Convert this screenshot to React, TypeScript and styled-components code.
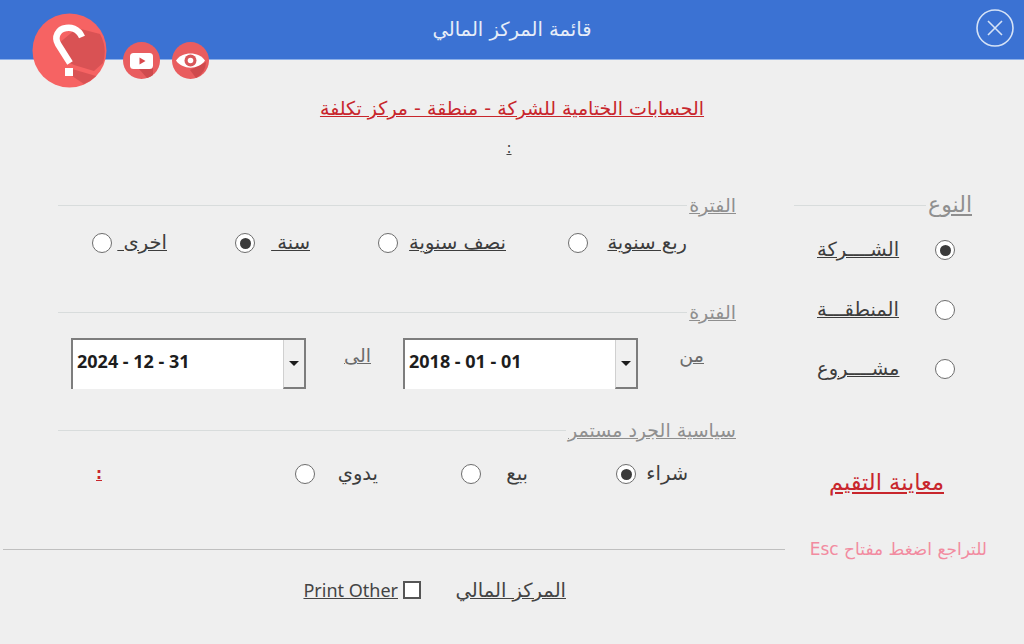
import React from 'react'
import styled, { createGlobalStyle } from 'styled-components'

const GlobalStyle = createGlobalStyle`
  html, body {
    margin: 0;
    padding: 0;
    background: #efefef;
  }
  body {
    font-family: 'DejaVu Sans', 'Noto Sans', sans-serif;
  }
`

const Page = styled.div`
  position: relative;
  width: 1024px;
  height: 644px;
  overflow: hidden;
  background: #efefef;
  direction: rtl;
`

const Header = styled.header`
  box-sizing: border-box;
  height: 60px;
  background: #3b72d3;
  border-bottom: 1px solid #8db0e8;
  display: flex;
  align-items: center;
  justify-content: center;
  position: relative;
`

const HeaderTitle = styled.h1`
  margin: 0;
  font-size: 19.5px;
  font-weight: 400;
  color: #e6edf8;
`

const CloseButton = styled.button`
  position: absolute;
  left: 976px;
  top: 9px;
  width: 38px;
  height: 38px;
  padding: 0;
  border: 0;
  background: none;
`

const HelpIcons = styled.div`
  position: absolute;
  left: 32px;
  top: 13px;
  direction: ltr;
  display: flex;
  align-items: flex-end;
  gap: 16px;
`

const SmallIcons = styled.div`
  display: flex;
  gap: 12px;
  margin-bottom: 9px;
`

const Heading = styled.h2`
  margin: 37px 0 0;
  height: 22px;
  line-height: 22px;
  text-align: center;
  font-size: 19px;
  font-weight: 400;
  color: #c8262c;
  text-decoration: underline;
`

const Colon = styled.div`
  margin-top: 19px;
  height: 20px;
  line-height: 20px;
  text-align: center;
  padding-right: 6px;
  font-size: 15px;
  color: #444;
  text-decoration: underline;
`

const Columns = styled.div`
  margin-top: 37px;
  padding: 0 52px 0 58px;
  display: grid;
  grid-template-columns: 178px 678px;
  column-gap: 58px;
`

const Column = styled.div`
  display: flex;
  flex-direction: column;
`

const Legend = styled.div<{ $top?: number }>`
  margin-top: ${(p) => p.$top ?? 0}px;
  height: 20px;
  display: flex;
  align-items: center;
  gap: 2px;
  &::after {
    content: '';
    flex: 1;
    height: 1px;
    background: #d8dcdc;
  }
`

const LegendText = styled.span<{ $size?: number }>`
  font-size: ${(p) => p.$size ?? 19}px;
  line-height: 20px;
  color: #8f8f8f;
  text-decoration: underline;
  white-space: nowrap;
`

const OptionRow = styled.div<{ $top: number }>`
  margin-top: ${(p) => p.$top}px;
  height: 24px;
  display: flex;
  align-items: center;
`

const Option = styled.label<{ $width: number; $start?: number; $top?: number }>`
  box-sizing: border-box;
  width: ${(p) => p.$width}px;
  height: 24px;
  flex: none;
  margin-right: ${(p) => p.$start ?? 0}px;
  margin-top: ${(p) => p.$top ?? 0}px;
  display: flex;
  align-items: center;
  justify-content: space-between;
`

const OptionText = styled.span<{ $plain?: boolean }>`
  font-size: 19.5px;
  line-height: 24px;
  color: #3d3d3d;
  white-space: pre;
  text-decoration: ${(p) => (p.$plain ? 'none' : 'underline')};
`

const Radio = styled.span<{ $checked?: boolean }>`
  box-sizing: border-box;
  width: 20px;
  height: 20px;
  flex: none;
  border-radius: 50%;
  border: 1.5px solid #6d6d6d;
  background: #fff;
  display: flex;
  align-items: center;
  justify-content: center;
  &::after {
    content: '';
    display: ${(p) => (p.$checked ? 'block' : 'none')};
    width: 11px;
    height: 11px;
    border-radius: 50%;
    background: #3a3a3a;
  }
`

const DateRow = styled.div`
  margin-top: 16px;
  padding-right: 32px;
  height: 51px;
  display: flex;
`

const DateLabel = styled.span<{ $gap?: number }>`
  width: 26px;
  flex: none;
  margin-right: ${(p) => p.$gap ?? 0}px;
  padding-top: 5px;
  font-size: 19px;
  line-height: 24px;
  color: #6b6b6b;
  text-decoration: underline;
  white-space: nowrap;
`

const DateBox = styled.div<{ $gap: number }>`
  box-sizing: border-box;
  width: 235px;
  height: 51px;
  flex: none;
  direction: ltr;
  background: #fff;
  border-top: 2px solid #7d7d7d;
  border-left: 2px solid #7d7d7d;
  display: flex;
  margin-right: ${(p) => p.$gap}px;
`

const DateValue = styled.span`
  flex: 1;
  padding: 11px 0 0 4px;
  font-family: 'Noto Sans', sans-serif;
  font-size: 18px;
  line-height: 20px;
  font-weight: 700;
  color: #1d1d1d;
`

const DateArrow = styled.span`
  box-sizing: border-box;
  width: 23px;
  background: #f0f0f0;
  border-left: 1px solid #d0d0d0;
  border-right: 2px solid #7d7d7d;
  border-bottom: 2px solid #7d7d7d;
  display: flex;
  align-items: center;
  justify-content: center;
  &::after {
    content: '';
    border-style: solid;
    border-width: 5px 5px 0;
    border-color: #1d1d1d transparent transparent;
  }
`

const PolicyRow = styled.div`
  margin-top: 22px;
  height: 24px;
  padding-right: 48px;
  display: flex;
  align-items: center;
`

const RedMark = styled.span`
  margin-right: 193px;
  font-size: 15px;
  font-weight: 700;
  color: #c8262c;
  text-decoration: underline;
`

const PreviewLink = styled.a`
  margin-top: 89px;
  margin-right: 28px;
  height: 24px;
  line-height: 24px;
  font-size: 22.5px;
  color: #c8262c;
  text-decoration: underline;
  white-space: nowrap;
`

const Divider = styled.div`
  margin-top: 45px;
  height: 20px;
  padding: 0 37px 0 3px;
  display: flex;
  align-items: center;
  gap: 25px;
  &::after {
    content: '';
    flex: 1;
    height: 1px;
    background: #bfbfbf;
  }
`

const EscHint = styled.span`
  width: 177px;
  flex: none;
  font-size: 17px;
  color: #f28ba0;
  white-space: nowrap;
`

const BottomRow = styled.div`
  margin-top: 19px;
  height: 24px;
  padding-right: 458px;
  display: flex;
  align-items: center;
`

const BottomLabel = styled.span`
  width: 110px;
  margin-left: 35px;
  font-size: 19.5px;
  color: #444;
  text-decoration: underline;
  white-space: nowrap;
`

const Checkbox = styled.span`
  box-sizing: border-box;
  width: 18px;
  height: 18px;
  background: #fff;
  border: 2px solid #555;
  margin-left: 5px;
`

const PrintOther = styled.span`
  direction: ltr;
  font-family: 'Noto Sans', sans-serif;
  font-size: 18px;
  color: #444;
  text-decoration: underline;
`

const CloseIcon = () => (
  <svg width="38" height="38" viewBox="0 0 38 38" fill="none" stroke="#d5e2f6" strokeWidth="1.6">
    <circle cx="19" cy="19" r="18" />
    <path d="M12 12 L26 26 M26 12 L12 26" />
  </svg>
)

const QuestionIcon = () => (
  <svg width="75" height="75" viewBox="0 0 75 75">
    <circle cx="37.5" cy="37.5" r="37" fill="#f66363" />
    <path d="M45 15 L68 21 A37 37 0 0 1 71 50 L62 58 L42 52 L38 50 L26 31 Z" fill="#d95254" />
    <path d="M40 56 L64 63 A37 37 0 0 1 52 71 L40 63 Z" fill="#d95254" />
    <path
      d="M50 24 C46 15 38 14 34 15 C26 16 22 24 26 31 L38 50"
      fill="none"
      stroke="#fff"
      strokeWidth="6.5"
    />
    <rect x="33" y="55" width="8" height="8" fill="#fff" />
  </svg>
)

const YoutubeIcon = () => (
  <svg width="37" height="37" viewBox="0 0 37 37">
    <circle cx="18.5" cy="18.5" r="18.5" fill="#e95d5f" />
    <path d="M18 24 L30 24 L30 33 A18.5 18.5 0 0 1 24 36 L16 27 Z" fill="#cf4a4d" />
    <rect x="7" y="11" width="23" height="16" rx="3.5" fill="#fff" />
    <path d="M16.5 15.5 L22.5 19 L16.5 22.5 Z" fill="#d9484b" />
  </svg>
)

const EyeIcon = () => (
  <svg width="37" height="37" viewBox="0 0 37 37">
    <circle cx="18.5" cy="18.5" r="18.5" fill="#e95d5f" />
    <path d="M18 28 L34 20 A18.5 18.5 0 0 1 24 36 Z" fill="#cf4a4d" />
    <path d="M4 18.5 C10 9 27 9 33 18.5 C27 28 10 28 4 18.5 Z" fill="#fff" />
    <circle cx="18.5" cy="18.5" r="6" fill="#d9575a" />
    <circle cx="18.5" cy="18.5" r="2.8" fill="#fff" />
  </svg>
)

const App: React.FC = () => (
  <Page>
    <GlobalStyle />
    <Header>
      <HeaderTitle>قائمة المركز المالي</HeaderTitle>
      <CloseButton aria-label="close">
        <CloseIcon />
      </CloseButton>
    </Header>
    <HelpIcons>
      <QuestionIcon />
      <SmallIcons>
        <YoutubeIcon />
        <EyeIcon />
      </SmallIcons>
    </HelpIcons>

    <Heading>الحسابات الختامية للشركة - منطقة - مركز تكلفة</Heading>
    <Colon>:</Colon>

    <Columns>
      <Column>
        <Legend>
          <LegendText $size={22}>النوع</LegendText>
        </Legend>
        <Option $width={138} $start={17} $top={23}>
          <Radio $checked />
          <OptionText>الشــــركة</OptionText>
        </Option>
        <Option $width={138} $start={17} $top={36}>
          <Radio />
          <OptionText>المنطقـــة</OptionText>
        </Option>
        <Option $width={138} $start={17} $top={35}>
          <Radio />
          <OptionText>مشــــروع</OptionText>
        </Option>
        <PreviewLink>معاينة التقيم</PreviewLink>
      </Column>

      <Column>
        <Legend>
          <LegendText>الفترة</LegendText>
        </Legend>
        <OptionRow $top={16}>
          <Option $width={119} $start={49}>
            <OptionText>ربع سنوية</OptionText>
            <Radio />
          </Option>
          <Option $width={128} $start={62}>
            <OptionText>نصف سنوية</OptionText>
            <Radio />
          </Option>
          <Option $width={75} $start={68}>
            <OptionText>سنة </OptionText>
            <Radio $checked />
          </Option>
          <Option $width={75} $start={68}>
            <OptionText>اخرى </OptionText>
            <Radio />
          </Option>
        </OptionRow>

        <Legend $top={47}>
          <LegendText>الفترة</LegendText>
        </Legend>
        <DateRow>
          <DateLabel>من</DateLabel>
          <DateBox $gap={40}>
            <DateValue>2018 - 01 - 01</DateValue>
            <DateArrow />
          </DateBox>
          <DateLabel $gap={32}>الى</DateLabel>
          <DateBox $gap={39}>
            <DateValue>2024 - 12 - 31</DateValue>
            <DateArrow />
          </DateBox>
        </DateRow>

        <Legend $top={31}>
          <LegendText>سياسية الجرد مستمر</LegendText>
        </Legend>
        <PolicyRow>
          <Option $width={72}>
            <OptionText $plain>شراء</OptionText>
            <Radio $checked />
          </Option>
          <Option $width={67} $start={88}>
            <OptionText $plain>بيع</OptionText>
            <Radio />
          </Option>
          <Option $width={83} $start={83}>
            <OptionText $plain>يدوي</OptionText>
            <Radio />
          </Option>
          <RedMark>:</RedMark>
        </PolicyRow>
      </Column>
    </Columns>

    <Divider>
      <EscHint>للتراجع اضغط مفتاح Esc</EscHint>
    </Divider>
    <BottomRow>
      <BottomLabel>المركز المالي</BottomLabel>
      <Checkbox />
      <PrintOther>Print Other</PrintOther>
    </BottomRow>
  </Page>
)

export default App
